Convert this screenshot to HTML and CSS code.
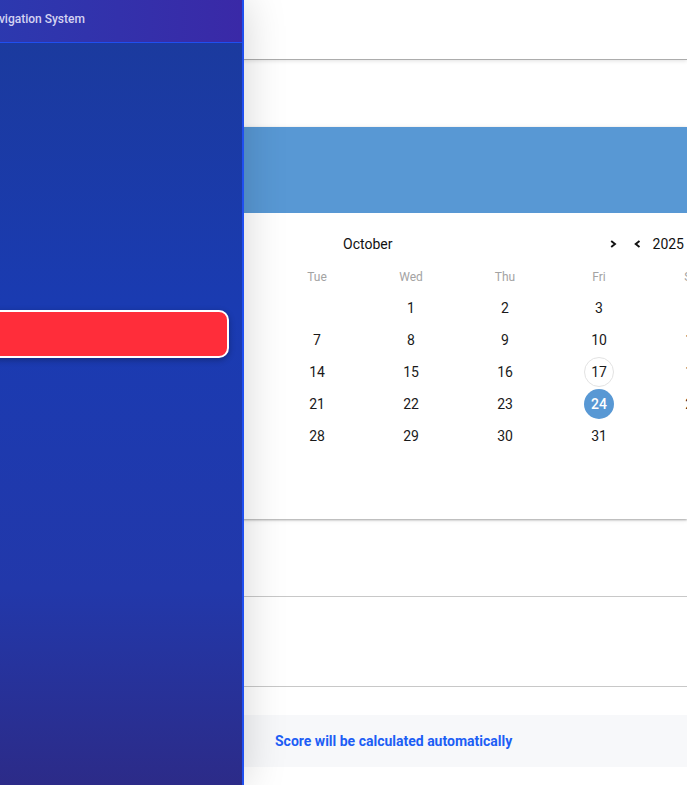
FILE: index.html
```html
<!DOCTYPE html>
<html lang="en">
<head>
<meta charset="utf-8">
<title>Navigation System</title>
<link rel="stylesheet" href="styles.css">
</head>
<body>
<main class="page">
  <header class="topbar"></header>
  <section class="card">
    <div class="banner"></div>
    <div class="cal">
      <div class="cal-head">
        <span class="month">October</span>
        <div class="year-nav">
          <svg class="chev next" width="7" height="8" viewBox="0 0 7 8"><path d="M1.2 1 L5 4 L1.2 7" fill="none" stroke="#111" stroke-width="1.9"/></svg>
          <svg class="chev prev" width="7" height="8" viewBox="0 0 7 8"><path d="M5.5 1 L1.7 4 L5.5 7" fill="none" stroke="#111" stroke-width="1.9"/></svg>
          <span class="year">2025</span>
        </div>
      </div>
      <div class="grid weekdays">
        <span>Sun</span><span>Mon</span><span>Tue</span><span>Wed</span><span>Thu</span><span>Fri</span><span>Sat</span>
      </div>
      <div class="grid days">
        <span></span><span></span><span></span><span>1</span><span>2</span><span>3</span><span>4</span>
        <span>5</span><span>6</span><span>7</span><span>8</span><span>9</span><span>10</span><span>11</span>
        <span>12</span><span>13</span><span>14</span><span>15</span><span>16</span><span class="today">17</span><span>18</span>
        <span>19</span><span>20</span><span>21</span><span>22</span><span>23</span><span class="sel">24</span><span>25</span>
        <span>26</span><span>27</span><span>28</span><span>29</span><span>30</span><span>31</span><span></span>
      </div>
    </div>
  </section>
  <section class="row row-a"></section>
  <section class="row row-b"></section>
  <div class="score">Score will be calculated automatically</div>
</main>
<aside class="drawer">
  <div class="drawer-head">Navigation System</div>
  <nav class="drawer-body">
    <button class="logout" type="button"></button>
  </nav>
</aside>
</body>
</html>
```

FILE: styles.css
```css
html, body {
  margin: 0;
  padding: 0;
  height: 100%;
  overflow: hidden;
  background: #fff;
  font-family: Roboto, "Liberation Sans", Arial, sans-serif;
}

.page {
  width: 100%;
}

.topbar {
  height: 59px;
  background: #fff;
  border-bottom: 1px solid #acacac;
  box-shadow: 0 1px 4px rgba(0, 0, 0, 0.12);
}

.card {
  margin-top: 67px;
  background: #fff;
  box-shadow: 0 1px 2px rgba(0, 0, 0, 0.3), 0 1px 5px rgba(0, 0, 0, 0.1);
}

.banner {
  height: 86px;
  background: #5898d4;
}

.cal {
  padding: 16px 0 67px 0;
}

.cal-head {
  height: 30px;
  display: flex;
  align-items: center;
  padding-left: 343px;
  padding-right: 3px;
  font-size: 14px;
  color: #111;
}

.year-nav {
  margin-left: auto;
  display: flex;
  align-items: center;
}

.chev {
  display: block;
}

.chev.next {
  margin-right: 17px;
}

.chev.prev {
  margin-right: 12px;
}

.grid {
  display: grid;
  grid-template-columns: repeat(7, 94px);
  padding-left: 82px;
  width: max-content;
}

.grid span {
  display: flex;
  align-items: center;
  justify-content: center;
}

.weekdays {
  margin-top: 3px;
}

.weekdays span {
  height: 30px;
  font-size: 12px;
  color: #a3a3a3;
}

.days span {
  height: 32px;
  font-size: 14px;
  color: #1a1a1a;
}

.days .today,
.days .sel {
  width: 30px;
  height: 30px;
  margin: 1px auto;
  border-radius: 50%;
  box-sizing: border-box;
}

.days .today {
  border: 1px solid #e3e3e3;
}

.days .sel {
  background: #5898d4;
  color: #fff;
  font-weight: 500;
}

.row {
  border-bottom: 1px solid #c8c8c8;
}

.row-a {
  height: 77px;
}

.row-b {
  height: 89px;
}

.score {
  margin-top: 28px;
  height: 52px;
  background: #f7f8fa;
  display: flex;
  align-items: center;
  padding-left: 275px;
  font-size: 14px;
  font-weight: 700;
  color: #1d5ef5;
}

.drawer {
  position: fixed;
  top: 0;
  bottom: 0;
  left: 0;
  width: 280px;
  box-sizing: border-box;
  transform: translateX(-36px);
  border-right: 2px solid #1f4ff0;
  background: linear-gradient(180deg, #1b3a9b 0%, #1a3bb2 40%, #2238aa 75%, #2c2b88 100%);
  box-shadow: 0 0 40px rgba(0, 0, 0, 0.18);
  display: flex;
  flex-direction: column;
}

.drawer-head {
  height: 38px;
  padding-bottom: 4px;
  border-bottom: 1px solid #1f4ff0;
  background: linear-gradient(90deg, #2a3bb0 0%, #3a29a7 100%);
  display: flex;
  align-items: center;
  padding-left: 20px;
  font-size: 12px;
  font-weight: 500;
  color: #d4d3f2;
}

.drawer-body {
  padding: 267px 13px 0 16px;
}

.logout {
  display: block;
  width: 100%;
  height: 48px;
  background: #ff2d3a;
  border: 2px solid #fff;
  border-radius: 10px;
  box-shadow: 0 2px 6px rgba(0, 0, 0, 0.3);
  padding: 0;
}
```
